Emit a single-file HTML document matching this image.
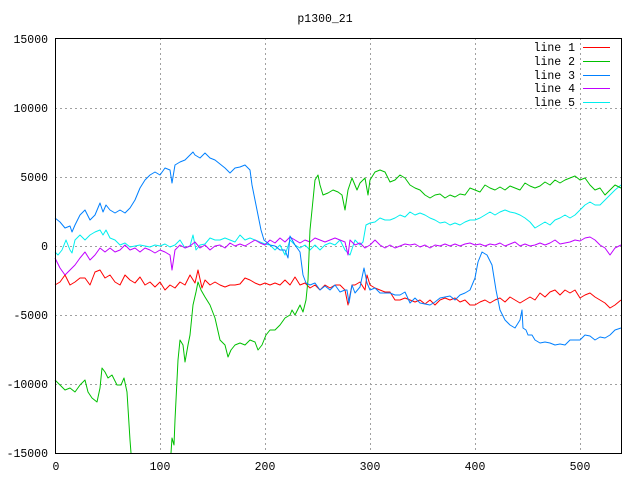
<!DOCTYPE html>
<html><head><style>body{margin:0;background:#fff}svg{display:block}text{font-family:"Liberation Mono",monospace;font-size:11.5px;fill:#000}</style></head><body>
<svg width="640" height="480" viewBox="0 0 640 480">
<g stroke="#a0a0a0" stroke-dasharray="2,3" stroke-width="1">
<line x1="55" y1="108.5" x2="621" y2="108.5"/><line x1="55" y1="177.5" x2="621" y2="177.5"/><line x1="55" y1="246.5" x2="621" y2="246.5"/><line x1="55" y1="315.5" x2="621" y2="315.5"/><line x1="55" y1="384.5" x2="621" y2="384.5"/>
<line x1="160.5" y1="38" x2="160.5" y2="453"/><line x1="265.5" y1="38" x2="265.5" y2="453"/><line x1="370.5" y1="38" x2="370.5" y2="453"/><line x1="475.5" y1="38" x2="475.5" y2="453"/><line x1="580.5" y1="38" x2="580.5" y2="453"/>
</g>
<text x="325" y="22" text-anchor="middle">p1300_21</text>
<g text-anchor="end"><text x="48" y="43">15000</text><text x="48" y="112">10000</text><text x="48" y="181">5000</text><text x="48" y="250">0</text><text x="48" y="319">-5000</text><text x="48" y="388">-10000</text><text x="48" y="457">-15000</text></g>
<g text-anchor="middle"><text x="56" y="470">0</text><text x="160" y="470">100</text><text x="265" y="470">200</text><text x="370" y="470">300</text><text x="475" y="470">400</text><text x="580" y="470">500</text></g>
<g text-anchor="end"><text x="575" y="51">line 1</text><text x="575" y="65">line 2</text><text x="575" y="79">line 3</text><text x="575" y="92">line 4</text><text x="575" y="106">line 5</text></g>
<g stroke-width="1.2" shape-rendering="crispEdges"><rect x="583" y="47" width="27" height="1" fill="#ff0000"/><rect x="583" y="61" width="27" height="1" fill="#00c000"/><rect x="583" y="75" width="27" height="1" fill="#0080ff"/><rect x="583" y="88" width="27" height="1" fill="#c000ff"/><rect x="583" y="102" width="27" height="1" fill="#00eeee"/></g>
<g fill="none" stroke-width="1" stroke-linejoin="round">
<polyline stroke="#00eeee" points="55,252 58,255 62,250 66,240 70,250 72,253 75,240 80,235 85,240 90,235 95,232 100,230 103,235 106,230 110,238 115,240 120,245 125,243 130,247 135,246 140,245 145,246 150,247 155,245 160,246 165,244 170,247 175,245 180,240 185,248 190,246 193,235 196,250 200,245 205,244 210,238 215,240 220,240 225,238 230,240 235,242 240,235 245,240 250,238 255,240 260,242 265,244 270,245 275,250 280,245 285,255 290,240 295,245 300,248 305,245 310,250 315,245 320,250 325,245 330,243 335,245 340,240 345,250 350,255 355,240 360,245 363,242 366,225 370,223 375,222 380,218 385,220 390,220 395,218 400,215 405,217 410,212 415,215 420,213 425,215 430,218 435,220 440,223 445,222 450,225 455,223 460,225 465,222 470,220 475,220 480,218 485,215 490,212 495,215 500,212 505,210 510,212 515,213 520,215 525,218 530,222 535,228 540,225 545,222 550,225 555,220 560,218 565,215 570,218 575,215 580,210 585,205 590,202 595,205 600,205 605,200 610,195 615,190 621,185"/>
<polyline stroke="#c000ff" points="55,258 60,268 65,275 70,270 75,265 80,258 85,252 90,260 95,255 100,248 105,252 110,248 115,252 120,250 125,245 130,250 135,248 140,252 145,248 150,250 155,253 160,250 165,252 170,255 172,270 175,250 180,245 185,248 190,246 195,242 200,248 205,245 210,250 215,246 220,245 225,248 230,243 235,246 240,244 245,246 250,243 255,240 260,243 265,245 270,240 275,243 280,238 285,242 290,237 295,240 300,243 305,240 310,242 315,238 320,240 325,242 330,240 335,238 340,240 345,242 348,255 350,240 355,245 360,243 365,248 370,245 375,240 380,245 385,248 390,245 395,248 400,246 405,244 410,245 415,244 420,247 425,245 430,248 435,245 440,246 445,244 450,246 455,244 460,246 465,244 470,243 475,245 480,244 485,246 490,244 495,245 500,243 505,246 510,244 515,242 520,246 525,244 530,246 535,245 540,243 545,245 550,243 555,240 560,244 565,243 570,242 575,240 580,241 585,238 590,237 595,240 600,245 605,248 610,255 615,248 621,245"/>
<polyline stroke="#ff0000" points="55,285 60,282 65,275 70,285 75,282 80,278 85,278 90,285 95,272 100,270 105,278 110,275 115,282 120,285 125,275 130,280 135,283 140,277 145,285 150,282 155,287 160,282 165,290 170,285 175,288 180,282 185,285 190,275 195,283 198,270 202,288 205,280 210,285 215,282 220,285 225,287 230,285 235,285 240,284 245,278 250,280 255,283 260,285 265,283 270,285 275,283 280,285 285,280 290,285 295,277 300,285 305,283 310,288 315,285 320,290 325,285 330,288 335,285 340,285 345,290 348,305 352,285 355,285 360,282 365,290 367,275 370,285 375,288 380,290 385,292 390,292 395,300 400,300 405,298 410,300 415,302 420,300 425,304 430,300 435,305 440,300 445,298 450,300 455,298 460,302 465,300 470,305 475,305 480,302 485,300 490,303 495,300 500,298 505,302 510,297 515,300 520,303 525,300 530,297 535,300 540,293 545,297 550,292 555,290 560,295 565,290 570,293 575,290 580,298 585,295 590,293 595,297 600,300 605,303 610,308 615,305 621,300"/>
<polyline stroke="#00c000" points="55,380 60,385 65,390 70,388 75,392 80,385 85,380 88,392 92,398 97,402 100,388 102,368 105,372 108,378 112,375 117,385 121,385 124,378 127,392 130,440 131,453"/>
<polyline stroke="#00c000" points="171,453 172,438 174,445 175,420 178,360 180,340 183,345 185,362 188,345 190,335 193,305 196,292 198,282 201,290 205,297 210,305 215,318 220,340 225,345 228,357 231,350 235,345 240,343 245,345 250,340 255,342 258,350 262,345 266,335 270,330 275,330 280,325 285,318 290,315 292,310 295,315 300,305 303,312 306,300 308,280 310,230 312,210 315,180 318,175 320,185 323,195 328,193 333,190 338,192 342,195 345,210 348,190 352,178 357,190 360,183 365,178 368,195 370,180 375,172 380,170 385,172 390,182 395,180 400,175 405,178 410,185 415,188 420,190 425,195 430,198 435,195 440,194 445,198 450,195 455,197 460,194 465,195 470,188 475,190 480,192 485,185 490,188 495,190 500,187 505,190 510,186 515,188 520,190 525,183 530,186 535,188 540,186 545,182 550,185 555,180 560,183 565,180 570,178 575,176 580,180 585,178 590,185 595,190 600,188 605,195 610,190 615,185 621,188"/>
<polyline stroke="#0080ff" points="55,218 60,222 65,228 70,226 72,232 75,225 80,215 85,210 90,220 95,215 100,203 103,212 106,205 110,210 115,213 120,210 125,213 130,208 135,200 140,188 145,180 150,175 155,172 160,175 165,168 170,170 172,183 175,165 180,162 185,160 190,155 193,152 195,155 200,158 205,153 210,158 215,160 220,164 225,168 230,173 235,168 240,167 245,165 250,170 252,185 255,200 258,215 261,230 264,240 270,245 275,246 280,250 285,250 288,258 290,236 295,245 300,252 303,275 306,283 310,285 315,283 320,290 325,286 330,290 335,285 340,292 345,290 347,290 349,303 352,285 355,293 360,287 364,268 367,283 370,290 375,288 380,293 385,293 390,293 395,295 400,295 405,292 410,303 415,298 420,303 425,304 430,305 435,302 440,298 445,297 450,296 455,300 460,295 465,293 470,290 475,278 478,262 482,252 487,255 492,265 496,290 500,310 505,320 510,325 515,328 520,320 522,310 523,328 526,330 528,335 532,335 535,340 540,343 545,342 550,343 555,345 560,344 565,345 570,340 575,340 580,340 585,335 590,336 595,340 600,337 605,338 610,335 615,330 621,328"/>
</g>
<rect x="55.5" y="38.5" width="566" height="415" fill="none" stroke="#000" stroke-width="1"/>
</svg>
</body></html>
